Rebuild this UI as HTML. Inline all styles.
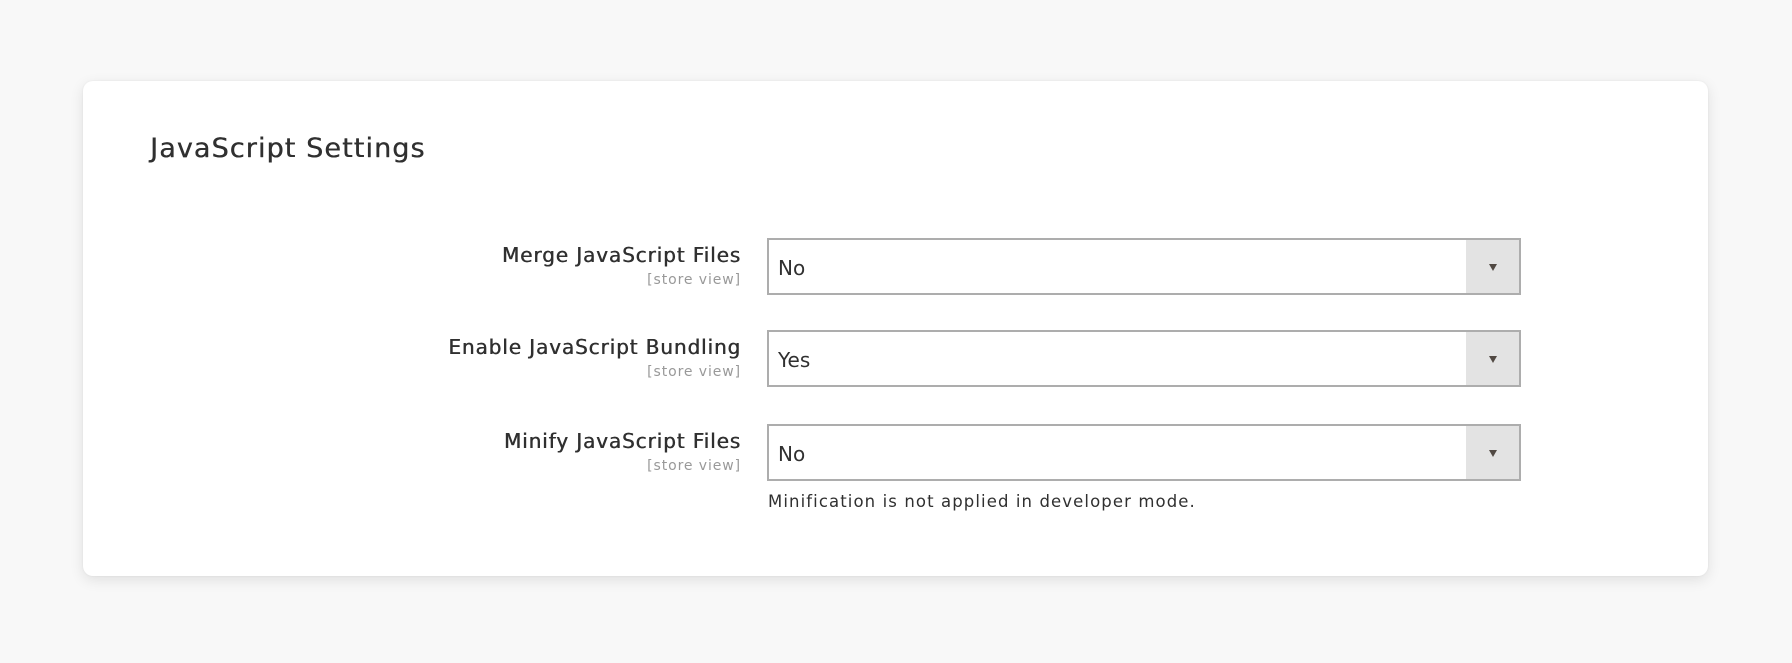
<!DOCTYPE html>
<html><head><meta charset="utf-8"><style>
html,body{margin:0;padding:0;width:1792px;height:663px;background:#f8f8f8;overflow:hidden;font-family:"DejaVu Sans","Liberation Sans",sans-serif;color:#303030}
.card{position:absolute;left:83px;top:81px;width:1625px;height:495px;background:#fff;border-radius:10px;box-shadow:0 4px 14px rgba(0,0,0,0.10),0 0 2px rgba(0,0,0,0.06)}
.title{position:absolute;left:150px;top:133px;font-size:27px;color:#303030;letter-spacing:1.1px;text-shadow:0.4px 0 0 #303030}
.lbl{position:absolute;right:1051px;text-align:right;font-size:20px;color:#303030;letter-spacing:0.9px;text-shadow:0.5px 0 0 #303030}
.sv{position:absolute;right:1051px;text-align:right;font-size:14px;color:#999;letter-spacing:0.9px}
.sel{position:absolute;left:767px;width:750px;height:53px;border:2px solid #adadad;background:#fff}
.sel span{position:absolute;left:9px;top:16px;font-size:20px;color:#303030}
.sel .btn{position:absolute;right:0;top:0;width:53px;height:53px;background:#e3e3e3}
.sel .btn:after{content:"";position:absolute;left:23px;top:24px;border-left:4px solid transparent;border-right:4px solid transparent;border-top:7px solid #514943}
.note{position:absolute;left:768px;top:492px;font-size:16.5px;color:#303030;letter-spacing:1.1px}
</style></head><body>
<div class="card"></div>
<div class="title">JavaScript Settings</div>

<div class="lbl" style="top:243px">Merge JavaScript Files</div>
<div class="sv" style="top:272px">[store view]</div>
<div class="sel" style="top:238px"><span>No</span><div class="btn"></div></div>

<div class="lbl" style="top:335px">Enable JavaScript Bundling</div>
<div class="sv" style="top:364px">[store view]</div>
<div class="sel" style="top:330px"><span>Yes</span><div class="btn"></div></div>

<div class="lbl" style="top:429px">Minify JavaScript Files</div>
<div class="sv" style="top:458px">[store view]</div>
<div class="sel" style="top:424px"><span>No</span><div class="btn"></div></div>

<div class="note">Minification is not applied in developer mode.</div>
</body></html>
